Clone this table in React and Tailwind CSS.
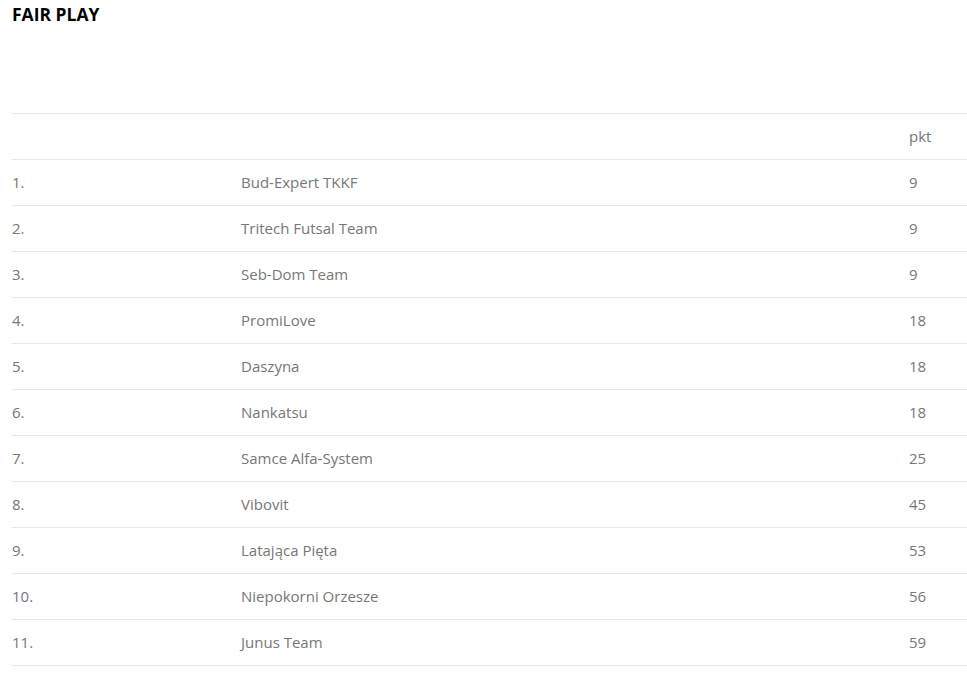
const rows = [
  ["1.", "Bud-Expert TKKF", 9],
  ["2.", "Tritech Futsal Team", 9],
  ["3.", "Seb-Dom Team", 9],
  ["4.", "PromiLove", 18],
  ["5.", "Daszyna", 18],
  ["6.", "Nankatsu", 18],
  ["7.", "Samce Alfa-System", 25],
  ["8.", "Vibovit", 45],
  ["9.", "Latająca Pięta", 53],
  ["10.", "Niepokorni Orzesze", 56],
  ["11.", "Junus Team", 59],
];

export default function App() {
  return (
    <div className="bg-white min-h-screen pl-3 font-['Open_Sans',sans-serif]">
      <h2 className="pt-[3px] text-[17.5px] leading-[22px] font-bold text-black">FAIR PLAY</h2>
      <div className="mt-[88px] border-t border-[#e8e8e8] text-[15px] text-[#777]">
        <div className="grid grid-cols-[229px_668px_1fr] h-[46px] items-center border-b border-[#e8e8e8]">
          <div></div>
          <div></div>
          <div>pkt</div>
        </div>
        {rows.map(([pos, team, pts]) => (
          <div
            key={pos}
            className="grid grid-cols-[229px_668px_1fr] h-[46px] items-center border-b border-[#e8e8e8]"
          >
            <div>{pos}</div>
            <div>{team}</div>
            <div>{pts}</div>
          </div>
        ))}
      </div>
    </div>
  );
}
